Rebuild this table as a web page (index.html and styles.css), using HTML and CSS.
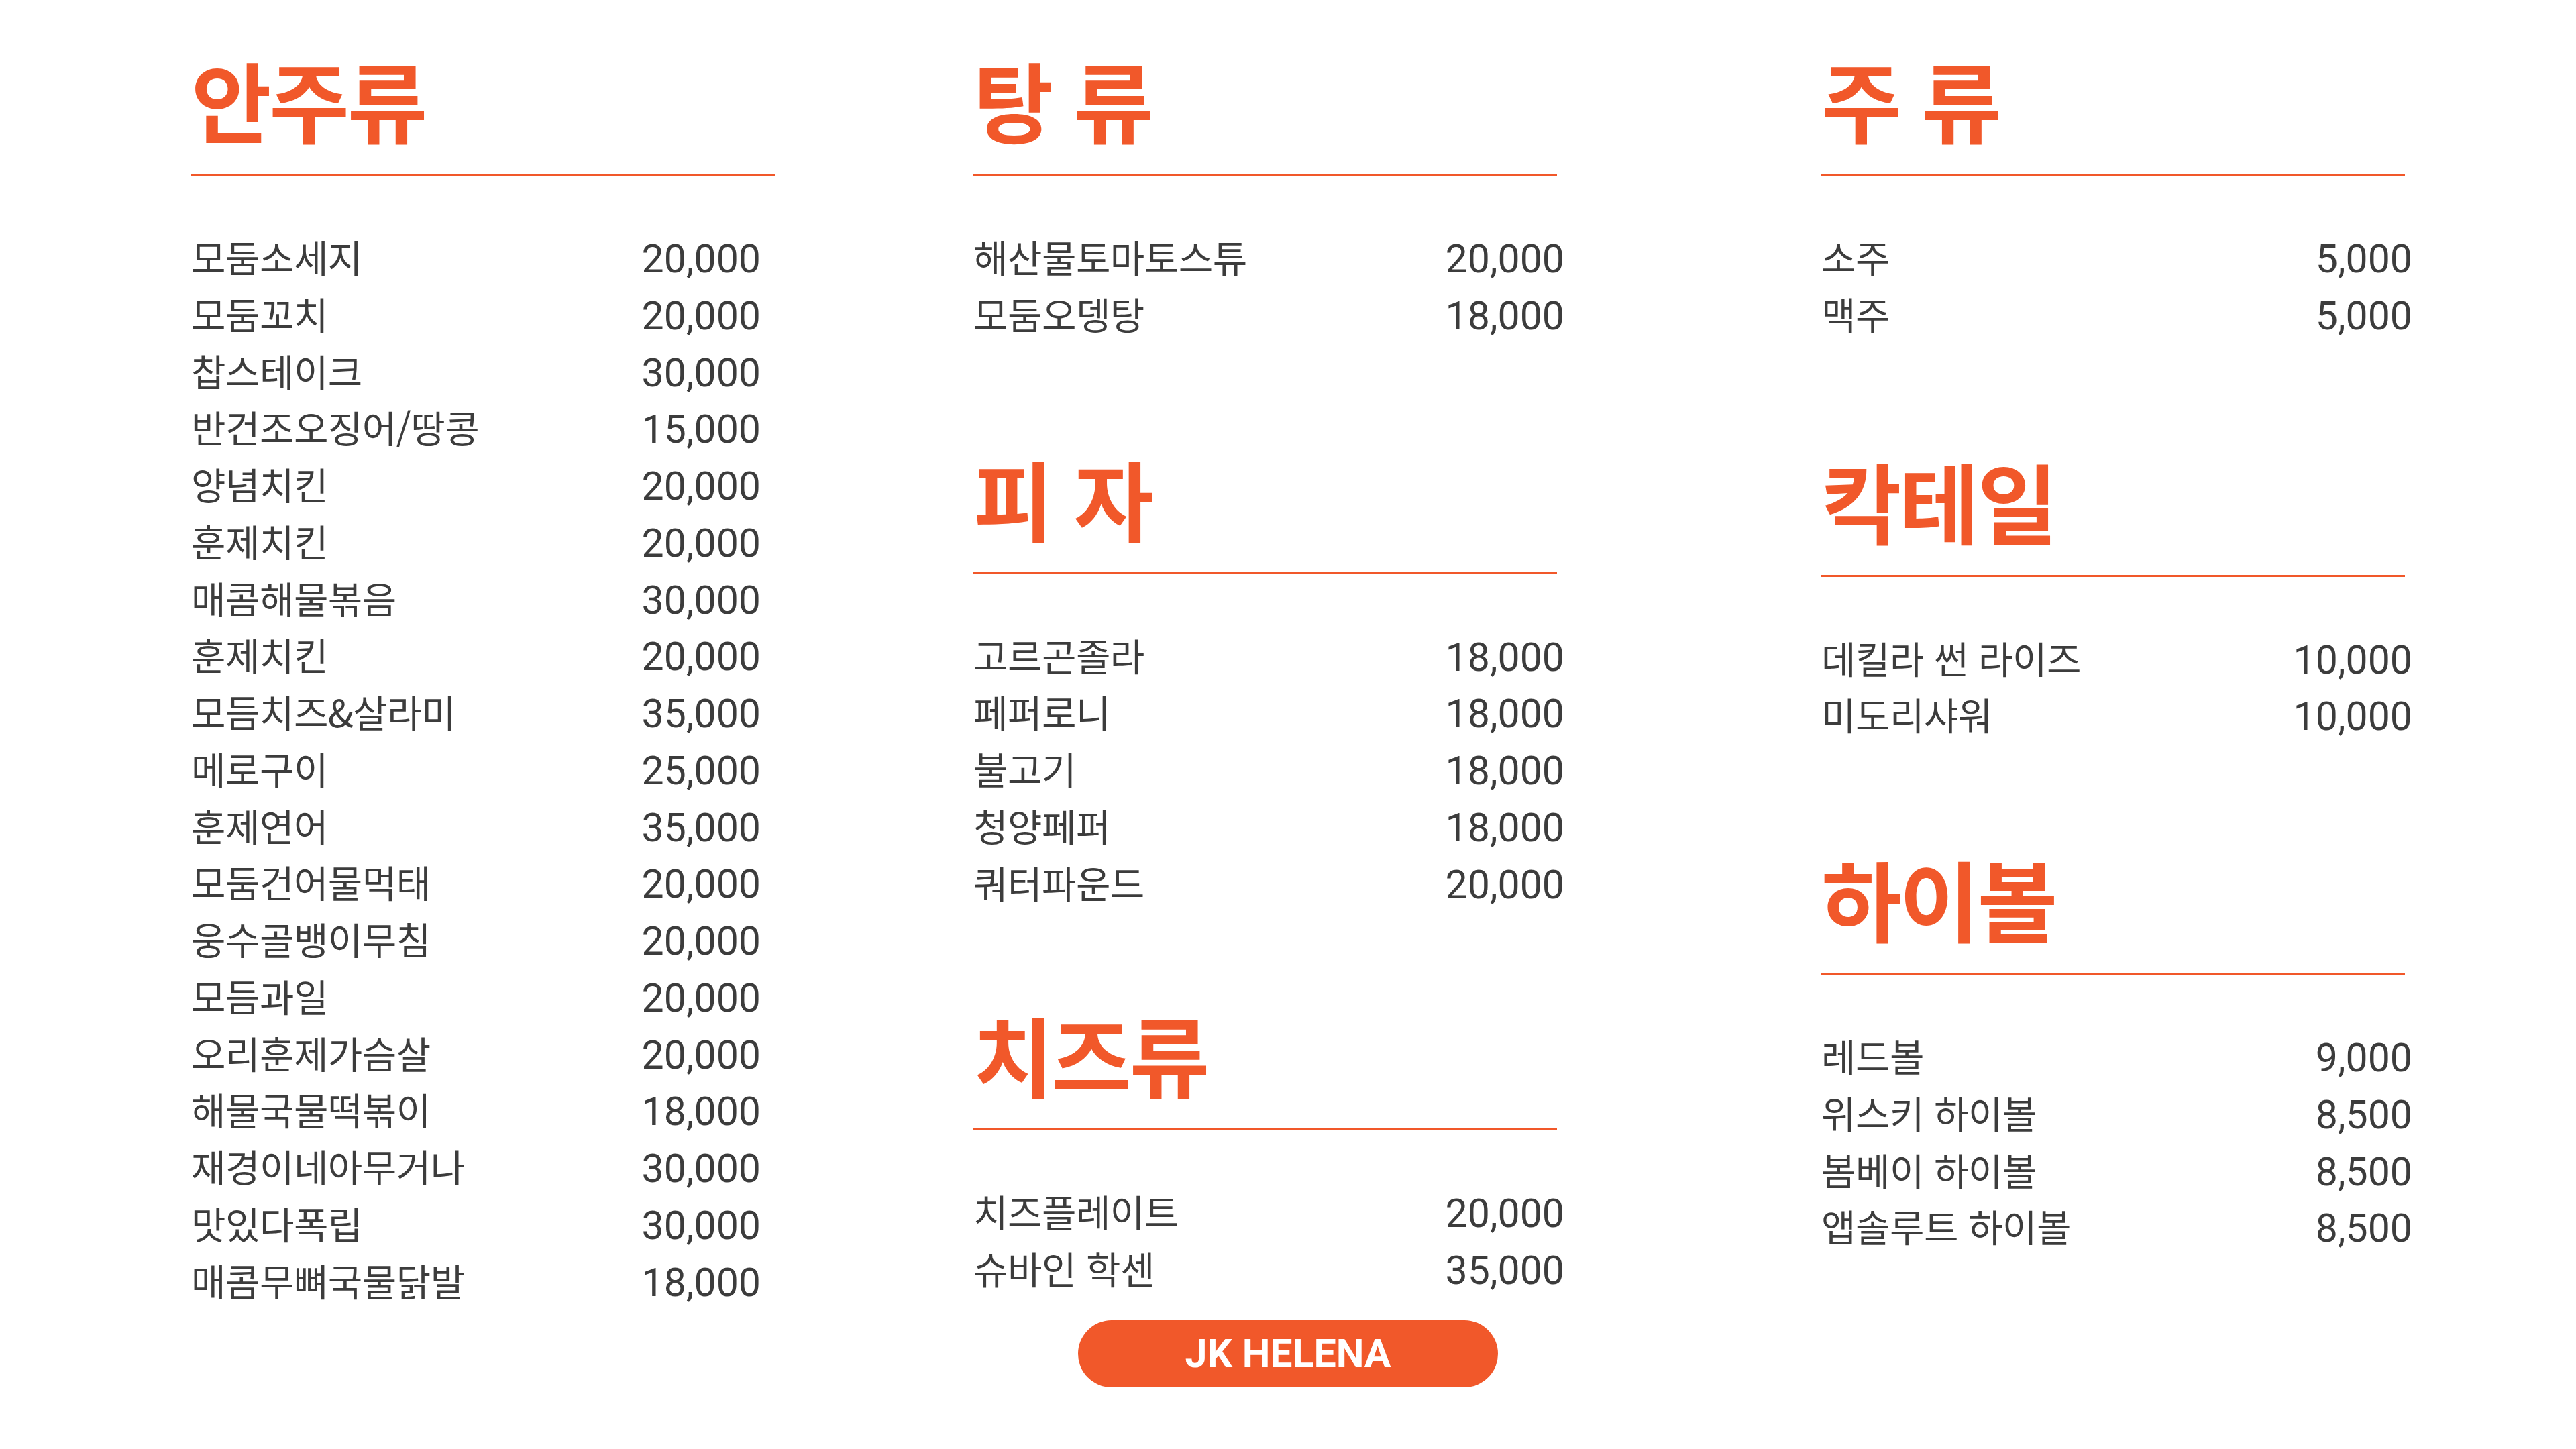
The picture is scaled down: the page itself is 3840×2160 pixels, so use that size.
FILE: index.html
```html
<!DOCTYPE html>
<html lang="ko">
<head>
    <meta charset="UTF-8">
    <meta name="viewport" content="width=device-width, initial-scale=1.0">
    <title>JK HELENA 메뉴</title>
    <link rel="stylesheet" href="styles.css">
</head>
<body>
    <div class="board">
        <div class="menu">
            <!-- 안주 -->
            <div class="column column-food">
                <section class="section">
                    <h2 class="section-title">안주류</h2>
                    <ul class="items">
                        <li class="item"><span class="name">모둠소세지</span><span class="price">20,000</span></li>
                        <li class="item"><span class="name">모둠꼬치</span><span class="price">20,000</span></li>
                        <li class="item"><span class="name">찹스테이크</span><span class="price">30,000</span></li>
                        <li class="item"><span class="name">반건조오징어/땅콩</span><span class="price">15,000</span></li>
                        <li class="item"><span class="name">양념치킨</span><span class="price">20,000</span></li>
                        <li class="item"><span class="name">훈제치킨</span><span class="price">20,000</span></li>
                        <li class="item"><span class="name">매콤해물볶음</span><span class="price">30,000</span></li>
                        <li class="item"><span class="name">훈제치킨</span><span class="price">20,000</span></li>
                        <li class="item"><span class="name">모듬치즈&amp;살라미</span><span class="price">35,000</span></li>
                        <li class="item"><span class="name">메로구이</span><span class="price">25,000</span></li>
                        <li class="item"><span class="name">훈제연어</span><span class="price">35,000</span></li>
                        <li class="item"><span class="name">모둠건어물먹태</span><span class="price">20,000</span></li>
                        <li class="item"><span class="name">웅수골뱅이무침</span><span class="price">20,000</span></li>
                        <li class="item"><span class="name">모듬과일</span><span class="price">20,000</span></li>
                        <li class="item"><span class="name">오리훈제가슴살</span><span class="price">20,000</span></li>
                        <li class="item"><span class="name">해물국물떡볶이</span><span class="price">18,000</span></li>
                        <li class="item"><span class="name">재경이네아무거나</span><span class="price">30,000</span></li>
                        <li class="item"><span class="name">맛있다폭립</span><span class="price">30,000</span></li>
                        <li class="item"><span class="name">매콤무뼈국물닭발</span><span class="price">18,000</span></li>
                    </ul>
                </section>
            </div>

            <!-- 탕 / 피자 / 치즈 -->
            <div class="column">
                <section class="section">
                    <h2 class="section-title">탕 류</h2>
                    <ul class="items">
                        <li class="item"><span class="name">해산물토마토스튜</span><span class="price">20,000</span></li>
                        <li class="item"><span class="name">모둠오뎅탕</span><span class="price">18,000</span></li>
                    </ul>
                </section>
                <section class="section">
                    <h2 class="section-title">피 자</h2>
                    <ul class="items">
                        <li class="item"><span class="name">고르곤졸라</span><span class="price">18,000</span></li>
                        <li class="item"><span class="name">페퍼로니</span><span class="price">18,000</span></li>
                        <li class="item"><span class="name">불고기</span><span class="price">18,000</span></li>
                        <li class="item"><span class="name">청양페퍼</span><span class="price">18,000</span></li>
                        <li class="item"><span class="name">쿼터파운드</span><span class="price">20,000</span></li>
                    </ul>
                </section>
                <section class="section section-snug">
                    <h2 class="section-title">치즈류</h2>
                    <ul class="items">
                        <li class="item"><span class="name">치즈플레이트</span><span class="price">20,000</span></li>
                        <li class="item"><span class="name">슈바인 학센</span><span class="price">35,000</span></li>
                    </ul>
                </section>
            </div>

            <!-- 주류 -->
            <div class="column column-drinks">
                <section class="section">
                    <h2 class="section-title">주 류</h2>
                    <ul class="items">
                        <li class="item"><span class="name">소주</span><span class="price">5,000</span></li>
                        <li class="item"><span class="name">맥주</span><span class="price">5,000</span></li>
                    </ul>
                </section>
                <section class="section section-wide">
                    <h2 class="section-title">칵테일</h2>
                    <ul class="items">
                        <li class="item"><span class="name">데킬라 썬 라이즈</span><span class="price">10,000</span></li>
                        <li class="item"><span class="name">미도리샤워</span><span class="price">10,000</span></li>
                    </ul>
                </section>
                <section class="section">
                    <h2 class="section-title">하이볼</h2>
                    <ul class="items">
                        <li class="item"><span class="name">레드볼</span><span class="price">9,000</span></li>
                        <li class="item"><span class="name">위스키 하이볼</span><span class="price">8,500</span></li>
                        <li class="item"><span class="name">봄베이 하이볼</span><span class="price">8,500</span></li>
                        <li class="item"><span class="name">앱솔루트 하이볼</span><span class="price">8,500</span></li>
                    </ul>
                </section>
            </div>
        </div>

        <div class="footer">
            <div class="brand">JK HELENA</div>
        </div>
    </div>
</body>
</html>
```

FILE: styles.css
```css
body {
    margin: 0;
    background: #ffffff;
    color: #3c3c3c;
    font-family: Roboto, "Noto Sans CJK KR", sans-serif;
}
.board {
    width: 3840px;
    height: 2160px;
    padding-top: 81px;
    box-sizing: border-box;
    overflow: hidden;
}
.menu {
    display: flex;
    align-items: flex-start;
    padding-left: 285px;
}
.column {
    width: 870px;
    margin-left: 296px;
}
.column-food {
    margin-left: 0;
}
.column-drinks {
    margin-left: 394px; /* right gap is wider than the left one */
}
.section + .section {
    margin-top: 165px;
}
.section + .section-snug {
    margin-top: 147px;
}
.section + .section-wide {
    margin-top: 169px;
}
.section-title {
    margin: 0;
    padding-bottom: 48px;
    border-bottom: 3px solid #f1582a;
    color: #f1582a;
    font-family: "Noto Sans CJK KR", sans-serif;
    font-weight: 700;
    font-size: 130px;
    line-height: 130px;
    letter-spacing: -0.025em;
}
.items {
    list-style: none;
    margin: 78px -11px 0 0;
    padding: 0;
}
.column-food .items {
    margin-right: 21px;
}
.item {
    display: flex;
    justify-content: space-between;
    align-items: baseline;
    height: 84.75px;
}
.name {
    font-family: "Noto Sans CJK KR", sans-serif;
    font-size: 56px;
    line-height: 84.75px;
    letter-spacing: -0.01em;
}
.price {
    font-family: Roboto, sans-serif;
    font-size: 59px;
    line-height: 84.75px;
}
.footer {
    display: flex;
    justify-content: center;
    margin-top: 18px;
}
.brand {
    width: 626px;
    height: 100px;
    border-radius: 50px;
    background: #f1582a;
    color: #ffffff;
    font-family: Roboto, sans-serif;
    font-weight: 700;
    font-size: 59px;
    line-height: 100px;
    text-align: center;
}
```
